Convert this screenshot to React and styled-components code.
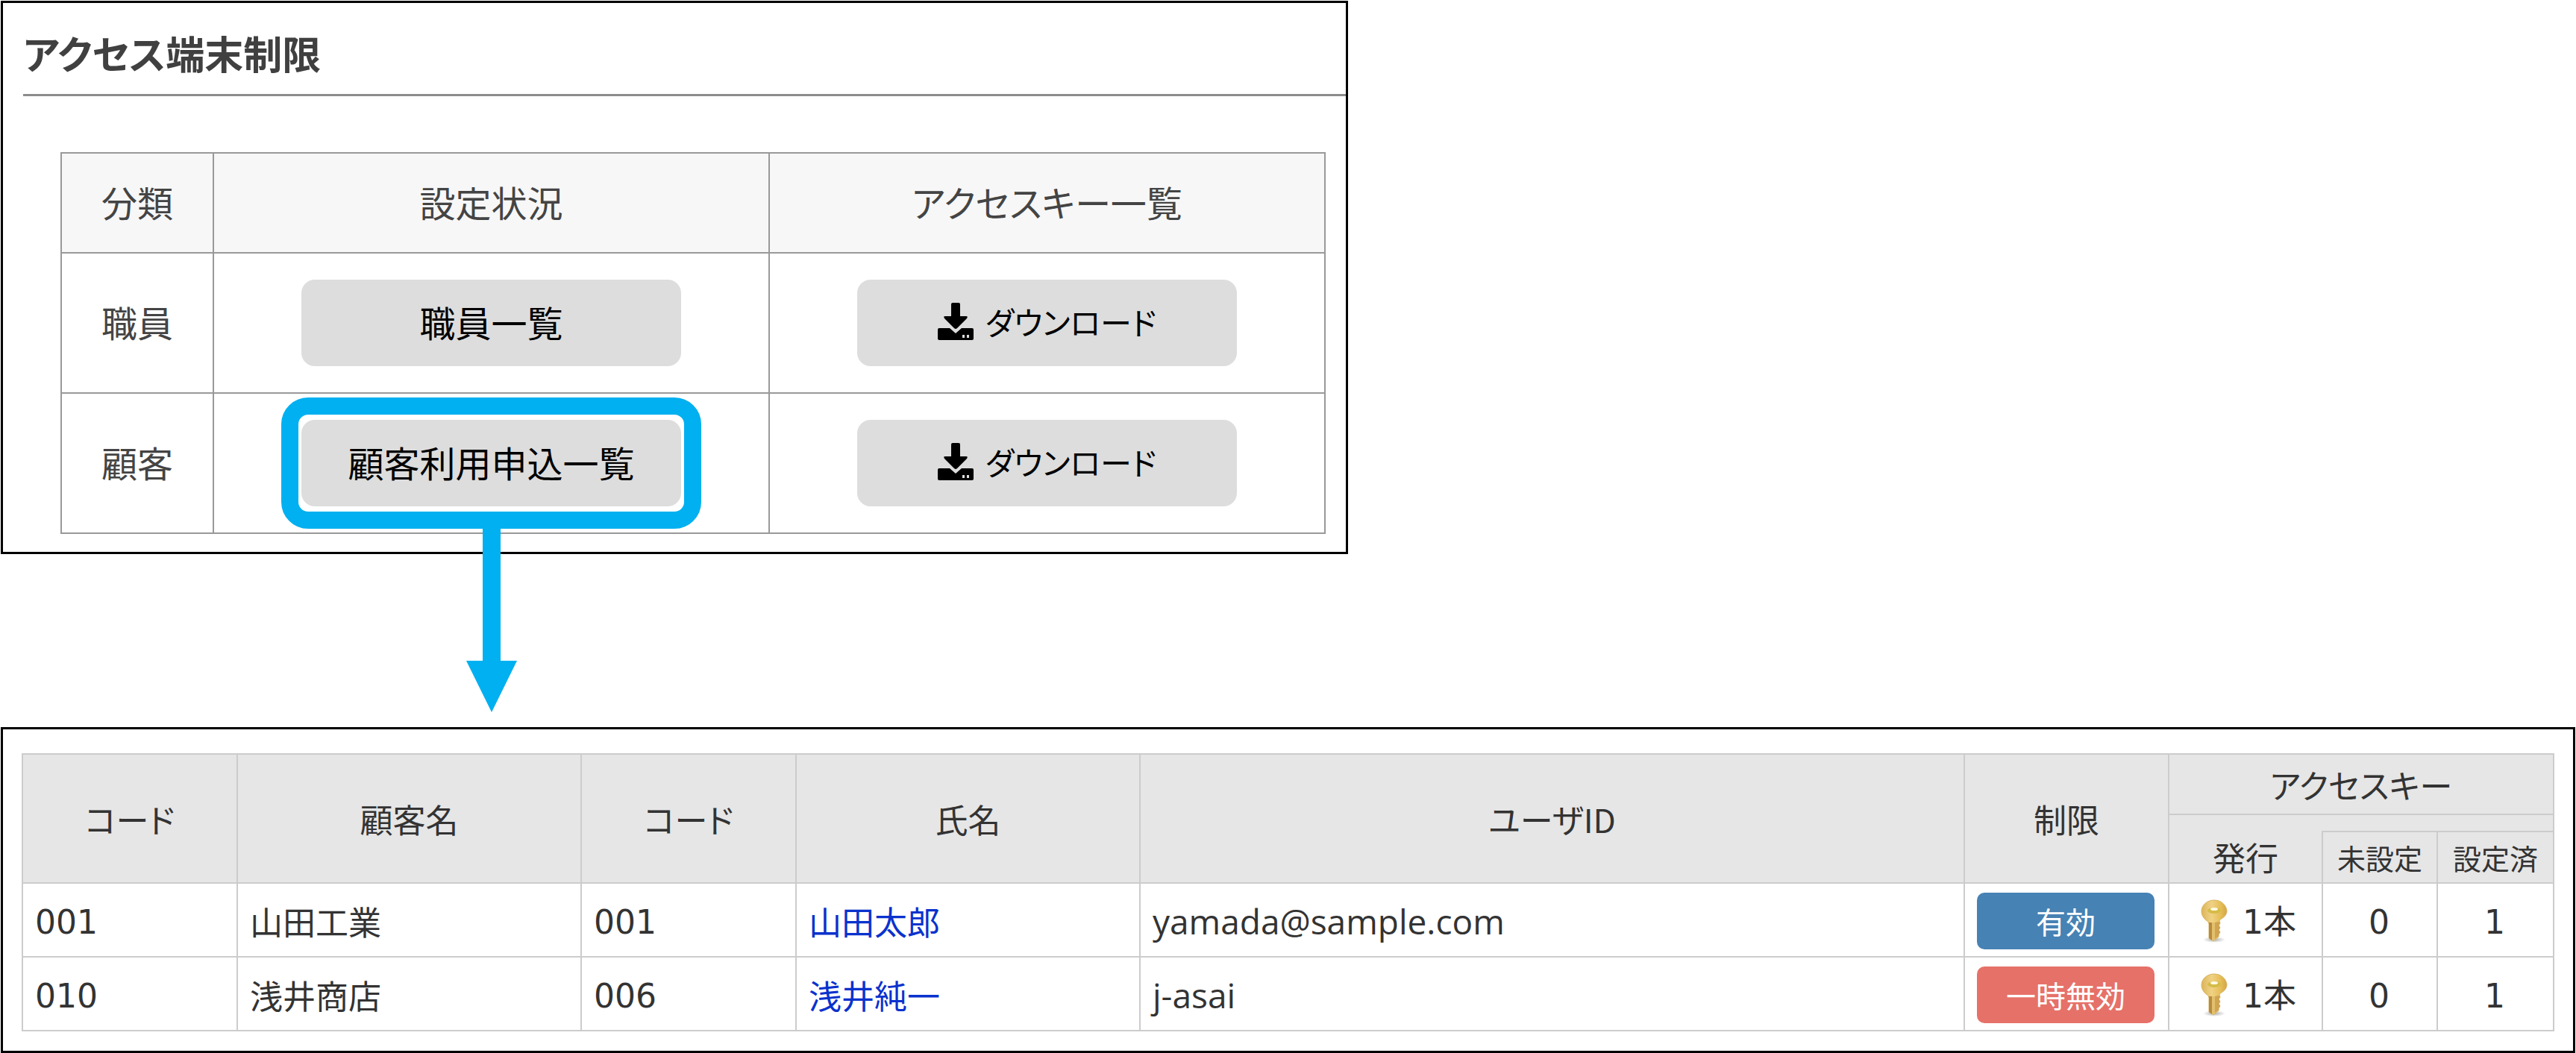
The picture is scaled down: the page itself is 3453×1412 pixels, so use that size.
import React from 'react';
import styled, { createGlobalStyle } from 'styled-components';

const GlobalStyle = createGlobalStyle`
    * {
        box-sizing: border-box;
    }

    body {
        margin: 0;
        background-color: #fff;
        color: #333;
        font-family: "Noto Sans CJK JP", sans-serif;
        font-feature-settings: "palt";
    }
`;

const Page = styled.main`
    display: flex;
    flex-direction: column;
    gap: 232px;
    padding: 1px;
`;

const Panel = styled.section`
    border: 3px solid #000;
`;

const SettingsPanel = styled(Panel)`
    width: 100%;
    max-width: 1806px;
    padding: 34px 0 24px 27px;
`;

const ListPanel = styled(Panel)`
    padding: 32px 25px 26px;
`;

const Title = styled.h1`
    margin: 0 0 75px;
    padding-bottom: 22px;
    border-bottom: 3px solid #8c8c8c;
    color: #404040;
    font-size: 52px;
    font-weight: 700;
    line-height: 66px;
`;

const SettingsWrap = styled.div`
    padding: 0 27px 0 50px;
`;

const SettingsTable = styled.table`
    width: 100%;
    table-layout: fixed;
    border-collapse: collapse;
    color: #444;
    font-size: 48px;
    line-height: 60px;
    text-align: center;

    th, td {
        padding: 34px 0 38px;
        border: 2px solid #999;
        font-weight: 400;
    }

    thead th {
        background-color: #f7f7f7;
    }

    td {
        padding: 35px 0;
    }
`;

const Col = styled.col`
    width: ${({ $width }) => ($width ? `${$width}px` : 'auto')};
`;

const GrayButton = styled.button`
    display: inline-flex;
    align-items: center;
    justify-content: center;
    gap: 16px;
    width: 509px;
    height: 116px;
    padding: 0 0 4px;
    border: 0;
    border-radius: 18px;
    background-color: #ddd;
    color: #000;
    font: inherit;
    font-feature-settings: inherit;
    font-size: ${({ $small }) => ($small ? 42 : 48)}px;
    vertical-align: top;
    cursor: pointer;
`;

const Highlight = styled.div`
    position: relative;
    display: inline-block;
    vertical-align: top;

    &::after {
        content: "";
        position: absolute;
        inset: -30px -27px;
        border: 23px solid #00b0f0;
        border-radius: 36px;
        pointer-events: none;
    }
`;

const Arrow = styled.svg`
    position: absolute;
    top: calc(100% + 28px);
    left: calc(50% - 34px);
    z-index: 1;
    width: 68px;
    height: 248px;
    fill: #00b0f0;
`;

const ListTable = styled.table`
    width: 100%;
    table-layout: fixed;
    border-collapse: collapse;
    font-size: 44px;
    line-height: 60px;

    th, td {
        border: 2px solid #ccc;
        font-weight: 400;
    }

    th {
        padding: 0;
    }

    td {
        padding: 2px 18px 0 16px;
    }

    thead {
        background-color: #e6e6e6;
    }

    tbody tr {
        height: 99px;
    }
`;

const HeadRow = styled.tr`
    height: ${({ $height }) => $height}px;
`;

const SpacerCell = styled.td`
    && {
        padding: 0;
        border-bottom: 0;
    }
`;

const IssuedHead = styled.th`
    && {
        border-top: 0;
    }
`;

const SmallHead = styled.th`
    font-size: 38px;
`;

const Digits = styled.span`
    font-family: "DejaVu Sans", sans-serif;
`;

const UserId = styled.span`
    font-family: "Open Sans", sans-serif;
    font-size: 46px;
`;

const CenterCell = styled.td`
    text-align: center;
`;

const NameLink = styled.a`
    color: #0a32cd;
    text-decoration: none;
`;

const StatusButton = styled.button`
    display: block;
    width: 100%;
    height: 76px;
    padding: 0;
    border: 0;
    border-radius: 10px;
    background-color: ${({ $active }) => ($active ? '#4682b4' : '#e67168')};
    color: #fff;
    font: inherit;
    font-feature-settings: inherit;
    font-size: 40px;
    cursor: pointer;
`;

const KeyCount = styled.div`
    display: flex;
    align-items: center;
    justify-content: center;
    gap: 20px;
    padding-left: 10px;
`;

const DownloadIcon = () => (
    <svg width="48" height="50" viewBox="0 0 48 50" aria-hidden="true">
        <path d="M20 0h8q2 0 2 2V18h8q3 0 1 3L26 34q-2 2-4 0L9 21q-2-3 1-3H18V2Q18 0 20 0z" />
        <path
            fillRule="evenodd"
            d="M2 34h14l8 7 8-7H46q2 0 2 2v12q0 2-2 2H2q-2 0-2-2V36q0-2 2-2zM33 43v4h3v-4zM39 43v4h3v-4z"
        />
    </svg>
);

const KeyIcon = () => (
    <svg width="36" height="58" viewBox="0 0 36 58" aria-hidden="true">
        <defs>
            <linearGradient id="keyGold" x1="0" x2="1">
                <stop offset="0" stopColor="#dcb45a" />
                <stop offset="0.4" stopColor="#f0d285" />
                <stop offset="0.75" stopColor="#e6be58" />
                <stop offset="1" stopColor="#d3a548" />
            </linearGradient>
            <radialGradient id="keyShadow">
                <stop offset="0" stopColor="#777" stopOpacity="0.6" />
                <stop offset="1" stopColor="#777" stopOpacity="0" />
            </radialGradient>
        </defs>
        <ellipse cx="18" cy="54" rx="15" ry="4" fill="url(#keyShadow)" />
        <path
            d="M18 1C8 1 1 8 1 16c0 6 4 11 9 14l1 3v19l6 4 7-6v-3l2-3-2-3 2-3-2-3 2-3-1-3 1-2c6-3 9-7 9-12C34 8 28 1 18 1z"
            fill="url(#keyGold)"
            stroke="#d8b260"
        />
        <path d="M11 31v21l4 3V31z" fill="#b88a3c" />
        <path d="M15 31h4v22l-2 2-2-1z" fill="#e3c06e" />
        <path d="M19 31v22l5-4v-2l2-3-2-3 2-3-2-3 2-3-2-2z" fill="#d0a450" />
        <ellipse cx="18" cy="15" rx="9" ry="4" fill="#d4bc48" />
        <ellipse cx="18" cy="13" rx="5" ry="2" fill="#fffbe6" />
    </svg>
);

const customers = [
    { code: '001', customer: '山田工業', userCode: '001', name: '山田太郎', userId: 'yamada@sample.com', active: true, issued: 1, unset: 0, set: 1 },
    { code: '010', customer: '浅井商店', userCode: '006', name: '浅井純一', userId: 'j-asai', active: false, issued: 1, unset: 0, set: 1 },
];

const DownloadButton = () => (
    <GrayButton type="button" $small><DownloadIcon />ダウンロード</GrayButton>
);

const Settings = () => (
    <SettingsPanel>
        <Title>アクセス端末制限</Title>
        <SettingsWrap>
            <SettingsTable>
                <colgroup>
                    <Col $width={204} />
                    <Col />
                    <Col />
                </colgroup>
                <thead>
                    <tr>
                        <th scope="col">分類</th>
                        <th scope="col">設定状況</th>
                        <th scope="col">アクセスキー一覧</th>
                    </tr>
                </thead>
                <tbody>
                    <tr>
                        <th scope="row">職員</th>
                        <td><GrayButton type="button">職員一覧</GrayButton></td>
                        <td><DownloadButton /></td>
                    </tr>
                    <tr>
                        <th scope="row">顧客</th>
                        <td>
                            <Highlight>
                                <GrayButton type="button">顧客利用申込一覧</GrayButton>
                                <Arrow viewBox="0 0 68 248" aria-hidden="true">
                                    <path d="M22 0h24v179H68L34 248 0 179h22z" />
                                </Arrow>
                            </Highlight>
                        </td>
                        <td><DownloadButton /></td>
                    </tr>
                </tbody>
            </SettingsTable>
        </SettingsWrap>
    </SettingsPanel>
);

const CustomerList = () => (
    <ListPanel>
        <ListTable>
            <colgroup>
                <Col $width={288} />
                <Col $width={461} />
                <Col $width={288} />
                <Col $width={461} />
                <Col />
                <Col $width={274} />
                <Col $width={206} />
                <Col $width={154} />
                <Col $width={156} />
            </colgroup>
            <thead>
                <HeadRow $height={81}>
                    <th scope="col" rowSpan={3}>コード</th>
                    <th scope="col" rowSpan={3}>顧客名</th>
                    <th scope="col" rowSpan={3}>コード</th>
                    <th scope="col" rowSpan={3}>氏名</th>
                    <th scope="col" rowSpan={3}>ユーザID</th>
                    <th scope="col" rowSpan={3}>制限</th>
                    <th scope="colgroup" colSpan={3}>アクセスキー</th>
                </HeadRow>
                <HeadRow $height={23}>
                    <SpacerCell colSpan={3} />
                </HeadRow>
                <HeadRow $height={69}>
                    <IssuedHead scope="col">発行</IssuedHead>
                    <SmallHead scope="col">未設定</SmallHead>
                    <SmallHead scope="col">設定済</SmallHead>
                </HeadRow>
            </thead>
            <tbody>
                {customers.map((row) => (
                    <tr key={row.code}>
                        <td><Digits>{row.code}</Digits></td>
                        <td>{row.customer}</td>
                        <td><Digits>{row.userCode}</Digits></td>
                        <td><NameLink href="#">{row.name}</NameLink></td>
                        <td><UserId>{row.userId}</UserId></td>
                        <td>
                            <StatusButton type="button" $active={row.active}>
                                {row.active ? '有効' : '一時無効'}
                            </StatusButton>
                        </td>
                        <CenterCell>
                            <KeyCount>
                                <KeyIcon />
                                <span><Digits>{row.issued}</Digits>本</span>
                            </KeyCount>
                        </CenterCell>
                        <CenterCell><Digits>{row.unset}</Digits></CenterCell>
                        <CenterCell><Digits>{row.set}</Digits></CenterCell>
                    </tr>
                ))}
            </tbody>
        </ListTable>
    </ListPanel>
);

const App = () => (
    <>
        <GlobalStyle />
        <Page>
            <Settings />
            <CustomerList />
        </Page>
    </>
);

export default App;
